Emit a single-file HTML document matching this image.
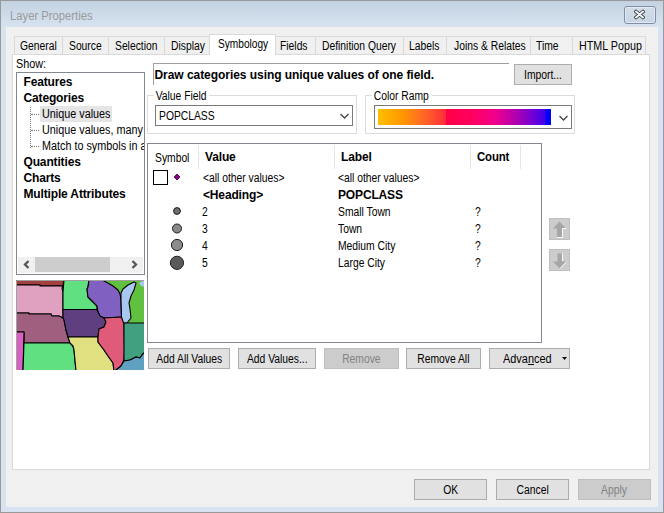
<!DOCTYPE html>
<html><head><meta charset="utf-8">
<style>
*{margin:0;padding:0;box-sizing:border-box}
html,body{width:664px;height:513px;overflow:hidden;background:#f0f0f0}
body{position:relative;font-family:"Liberation Sans",sans-serif;color:#000}
.a{position:absolute}
.t{position:absolute;margin-top:1px;font-size:12px;line-height:13px;white-space:nowrap;transform:scaleX(.86);transform-origin:0 0}
.b{position:absolute;font-size:12px;line-height:14px;font-weight:bold;letter-spacing:-0.15px;white-space:nowrap}
#frame{left:0;top:0;width:664px;height:513px;border:1px solid #999;background:#d7e3f1}
#titlegrad{left:1px;top:1px;width:662px;height:26px;background:linear-gradient(#c3d2e1,#d7e3f1)}
#inner{left:6px;top:27px;width:652px;height:480px;background:#f0f0f0}
.tab{position:absolute;top:36px;height:18px;border:1px solid #d9d9d9;border-bottom:none;background:#f0f0f0}
.tab span{position:absolute;top:3px;font-size:12px;line-height:13px;transform:scaleX(.86);transform-origin:0 0;white-space:nowrap}
.tab.sel{top:34px;height:21px;background:#fff;z-index:3}
.tab.sel span{top:3px}
#panel{left:12px;top:54px;width:638px;height:416px;background:#fff;border:1px solid #d9d9d9;z-index:2}
.btn{position:absolute;height:21px;border:1px solid #adadad;background:#e1e1e1;text-align:center;font-size:12px;line-height:19px;white-space:nowrap;color:#000}
.btn span{display:inline-block;position:relative;top:1px;transform:scaleX(.86)}
.btn.dis{border-color:#bfbfbf;background:#cccccc;color:#838383}
.grp{position:absolute;border:1px solid #dcdcdc}
.grp span{position:absolute;top:-6px;left:6px;background:#fff;padding:0 3px 0 2px;font-size:12px;line-height:13px;white-space:nowrap;transform:scaleX(.86);transform-origin:0 0}
.combo{position:absolute;border:1px solid #7a7a7a;background:#fff}
.chev{position:absolute}
</style></head><body>
<div id="frame" class="a"></div>
<div id="titlegrad" class="a"></div>
<div class="t" style="left:10px;top:9px;font-size:12.5px;color:#9a9a9a;transform:scaleX(.9)">Layer Properties</div>
<!-- close button -->
<div class="a" style="left:624px;top:6px;width:32px;height:18px;border:1px solid #7f8ea6;border-radius:3px;background:linear-gradient(#d2dde9,#c8d5e3);box-shadow:inset 0 0 0 1px #e3eaf2"></div>
<svg class="a" style="left:633px;top:9px" width="14" height="12" viewBox="0 0 14 12">
<path d="M3 2.6 L10 8.4 M10 2.6 L3 8.4" stroke="#3c4048" stroke-width="3.8" stroke-linecap="round"/>
<path d="M3 2.6 L10 8.4 M10 2.6 L3 8.4" stroke="#f6f6f6" stroke-width="2" stroke-linecap="round"/>
</svg>
<div id="inner" class="a"></div>

<!-- tabs -->
<div class="tab" style="left:14px;width:49px"><span style="left:4.5px">General</span></div>
<div class="tab" style="left:62px;width:47px"><span style="left:6.2px">Source</span></div>
<div class="tab" style="left:108px;width:57px"><span style="left:6.3px">Selection</span></div>
<div class="tab" style="left:164px;width:48px"><span style="left:6.0px">Display</span></div>
<div class="tab sel" style="left:209px;width:67px"><span style="left:7.6px;transform:scaleX(.845)">Symbology</span></div>
<div class="tab" style="left:275px;width:41px"><span style="left:4.4px">Fields</span></div>
<div class="tab" style="left:315px;width:89px"><span style="left:6.3px">Definition Query</span></div>
<div class="tab" style="left:403px;width:44px"><span style="left:5.0px">Labels</span></div>
<div class="tab" style="left:446px;width:85px"><span style="left:6.9px">Joins &amp; Relates</span></div>
<div class="tab" style="left:530px;width:43px"><span style="left:5.0px">Time</span></div>
<div class="tab" style="left:572px;width:74px"><span style="left:5.5px;transform:scaleX(.895)">HTML Popup</span></div>

<div id="panel" class="a"></div>
<div id="content" class="a" style="left:0;top:0;width:664px;height:513px;z-index:4">
<div class="t" style="left:16px;top:57px;transform:scaleX(.9)">Show:</div>

<!-- list box -->
<div class="a" style="left:16px;top:72px;width:129px;height:203px;border:1px solid #828790;background:#fff;overflow:hidden">
  <div class="b" style="left:6.5px;top:2px">Features</div>
  <div class="b" style="left:6.5px;top:18px">Categories</div>
  <div class="a" style="left:23px;top:33px;width:72px;height:16px;background:#e5e5e5"></div>
  <div class="a" style="left:13px;top:34px;width:1px;height:41px;border-left:1px dotted #7a7a7a"></div>
  <div class="a" style="left:14px;top:41px;width:8px;height:1px;border-top:1px dotted #7a7a7a"></div>
  <div class="a" style="left:14px;top:57px;width:8px;height:1px;border-top:1px dotted #7a7a7a"></div>
  <div class="a" style="left:14px;top:73px;width:8px;height:1px;border-top:1px dotted #7a7a7a"></div>
  <div class="t" style="left:25px;top:34px;transform:scaleX(.9)">Unique values</div>
  <div class="t" style="left:25px;top:50px;transform:scaleX(.9)">Unique values, many</div>
  <div class="t" style="left:25px;top:66px;transform:scaleX(.9)">Match to symbols in a</div>
  <div class="b" style="left:6.5px;top:82px">Quantities</div>
  <div class="b" style="left:6.5px;top:98px">Charts</div>
  <div class="b" style="left:6.5px;top:114px">Multiple Attributes</div>
  <!-- scrollbar -->
  <div class="a" style="left:1px;top:184px;width:125px;height:16px;background:#f0f0f0"></div>
  <div class="a" style="left:18px;top:184px;width:75px;height:15px;background:#cdcdcd"></div>
  <svg class="a" style="left:5.5px;top:187px" width="8" height="9"><path d="M5.5 1 L2 4.5 L5.5 8" fill="none" stroke="#555" stroke-width="2.3"/></svg>
  <svg class="a" style="left:113.3px;top:187px" width="8" height="9"><path d="M2.5 1 L6 4.5 L2.5 8" fill="none" stroke="#555" stroke-width="2.3"/></svg>
</div>

<!-- map -->
<svg class="a" style="left:16px;top:280px" width="128" height="90" viewBox="16 280 128 90">
<g stroke="#000" stroke-width="1.1" stroke-linejoin="round">
<rect x="16" y="280" width="129" height="91" fill="#60c040" stroke="none"/>
<polygon points="16,280 64,280 63,286 40,286 40,285 16,285" fill="#a33f3f"/>
<polygon points="16,285 40,285 40,286 63,286 62,288 63,292 63,318 59,316 52,316 51,314 29,314 29,313 16,313" fill="#e0a0c0"/>
<polygon points="64,280 89,280 88,287 87,289 88,297 92,301 97,306 97,309.5 63,309.5 63,292" fill="#60e080"/>
<polygon points="89,280 102,280 108,283 113,286 118,290 120,294 121,300 121.5,317 104,318 100,316 98,312 97,306 92,301 88,297 87,289 88,287" fill="#8060c0"/>
<polygon points="16,313 29,313 29,314 51,314 52,316 59,316 63,318 64,320 66,330 68,337 70,343 24,343 24,332 16,332" fill="#a05f7e"/>
<polygon points="63,309.5 97,309.5 98,312 100,316 104,318 106,322 104,327 99,329 98,337 68,337 66,330 64,320 63,318" fill="#603f80"/>
<polygon points="16,332 24,332 23,371 16,371" fill="#d860c0"/>
<polygon points="24,343 70,343 73,346 74,350 76,371 23,371" fill="#60e080"/>
<polygon points="68,337 98,337 98,342 104,350 108,356 113,363 114,371 76,371 74,350 73,346 70,343" fill="#e0e080"/>
<polygon points="104,318 121.5,317 124,322 124.5,352 124,360 121,366 116,370 114,371 113,363 108,356 104,350 98,342 98,337 99,329 104,327 106,322" fill="#e05a7a"/>
<polygon points="121,293 123,289 128,285 134,282 136,283 134,290 131,296 129,303 130,309 131,318 127,323 123.5,323 121.5,317 121,300" fill="#a8c8f0"/>
<polygon points="139,283 142,281 145,281 145,287 141,286" fill="#a8c8f0" stroke="none"/>
<polygon points="124,323 145,323 145,352 142,355 140,358 136,357 130,360 124,361" fill="#40a080"/>
<polygon points="124,361 130,360 136,357 140,358 142,355 145,352 145,371 114,371 116,370 121,366" fill="#60a0c0"/>
</g>
<path d="M16.5 370 L16.5 280.5 L144 280.5" fill="none" stroke="#a0a0a0"/>
</svg>

<!-- draw box -->
<div class="a" style="left:153px;top:63px;width:356px;height:22px;border-top:1px solid #a0a0a0;border-left:1px solid #a0a0a0"></div>
<div class="b" style="left:154.5px;top:68px;letter-spacing:-0.05px">Draw categories using unique values of one field.</div>
<div class="btn" style="left:514px;top:64px;width:58px"><span>Import...</span></div>

<!-- value field -->
<div class="grp" style="left:147px;top:95px;width:210px;height:39px"><span>Value Field</span></div>
<div class="combo" style="left:155px;top:105px;width:198px;height:21px"></div>
<div class="t" style="left:159.3px;top:109px">POPCLASS</div>
<svg class="a" style="left:339.5px;top:112.5px" width="9" height="6"><path d="M0.5 1 L4.5 5 L8.5 1" fill="none" stroke="#444" stroke-width="1.3"/></svg>

<!-- color ramp -->
<div class="grp" style="left:365px;top:95px;width:210px;height:39px"><span>Color Ramp</span></div>
<div class="combo" style="left:374px;top:105px;width:198px;height:24px"></div>
<div class="a" style="left:378px;top:109px;width:173px;height:16px;background:linear-gradient(to right,#ffbf00 0%,#ff9800 14%,#ff7020 24%,#ff4a30 33%,#ff2a3c 39%,#ff0048 39.6%,#ff0060 55%,#f0008c 68%,#a800b4 81%,#4000f0 96.5%,#0000ff 97.4%,#0000ff 100%)"></div>
<svg class="a" style="left:558.5px;top:114.5px" width="9" height="6"><path d="M0.5 1 L4.5 5 L8.5 1" fill="none" stroke="#444" stroke-width="1.3"/></svg>

<!-- table -->
<div class="a" style="left:147px;top:143px;width:395px;height:200px;border:1px solid #828790;background:#fff">
  <div class="a" style="left:50px;top:1px;width:1px;height:24px;background:#e5e5e5"></div>
  <div class="a" style="left:186px;top:1px;width:1px;height:24px;background:#e5e5e5"></div>
  <div class="a" style="left:322px;top:1px;width:1px;height:24px;background:#e5e5e5"></div>
  <div class="a" style="left:372px;top:1px;width:1px;height:24px;background:#e5e5e5"></div>
</div>
<div class="t" style="left:155px;top:150.5px">Symbol</div>
<div class="b" style="left:205px;top:150px">Value</div>
<div class="b" style="left:341px;top:150px">Label</div>
<div class="b" style="left:477px;top:150px;transform:scaleX(.95);transform-origin:0 0">Count</div>

<div class="a" style="left:153px;top:170px;width:15px;height:15px;border:1px solid #000;background:#fff"></div>
<svg class="a" style="left:172px;top:172px" width="10" height="10"><path d="M5 2 L8 5 L5 8 L2 5 Z" fill="#800080" stroke="#400040" stroke-width="0.8"/></svg>
<div class="t" style="left:203px;top:171px">&lt;all other values&gt;</div>
<div class="t" style="left:338px;top:171px">&lt;all other values&gt;</div>
<div class="b" style="left:203px;top:188px">&lt;Heading&gt;</div>
<div class="b" style="left:338px;top:188px">POPCLASS</div>

<svg class="a" style="left:167px;top:201px" width="20" height="70">
<circle cx="10" cy="10" r="3.4" fill="#6e6e6e" stroke="#1e1e1e"/>
<circle cx="10" cy="27.5" r="4.5" fill="#8a8a8a" stroke="#1e1e1e"/>
<circle cx="10" cy="44" r="5.6" fill="#8c8c8c" stroke="#1e1e1e"/>
<circle cx="10" cy="61.8" r="6.6" fill="#5a5a5a" stroke="#1e1e1e"/>
</svg>
<div class="t" style="left:202px;top:205px">2</div>
<div class="t" style="left:202px;top:222px">3</div>
<div class="t" style="left:202px;top:239px">4</div>
<div class="t" style="left:202px;top:256px">5</div>
<div class="t" style="left:338px;top:205px">Small Town</div>
<div class="t" style="left:338px;top:222px">Town</div>
<div class="t" style="left:338px;top:239px">Medium City</div>
<div class="t" style="left:338px;top:256px">Large City</div>
<div class="t" style="left:475px;top:205px">?</div>
<div class="t" style="left:475px;top:222px">?</div>
<div class="t" style="left:475px;top:239px">?</div>
<div class="t" style="left:475px;top:256px">?</div>

<!-- up/down -->
<div class="btn dis" style="left:549px;top:218px;width:21px;height:22px"></div>
<svg class="a" style="left:549px;top:218px" width="21" height="22">
<path d="M10.5 3.5 L17 10.5 L13 10.5 L13 19 L8 19 L8 10.5 L4 10.5 Z" fill="#a6a6a6"/>
<path d="M13.5 10.5 L13.5 19.5 L8 19.5 M13.5 10.5 L17 10.5" fill="none" stroke="#fafafa" stroke-width="1"/>
</svg>
<div class="btn dis" style="left:549px;top:249px;width:21px;height:22px"></div>
<svg class="a" style="left:549px;top:249px" width="21" height="22">
<path d="M8.5 4.5 L13 4.5 L13 12.5 L17 12.5 L10.5 19.5 L4 12.5 L8.5 12.5 Z" fill="#a6a6a6"/>
<path d="M13.5 4.5 L13.5 12 M17.2 13 L11 19.7" fill="none" stroke="#fafafa" stroke-width="1"/>
</svg>

<!-- buttons -->
<div class="btn" style="left:148px;top:348px;width:82px"><span>Add All Values</span></div>
<div class="btn" style="left:238px;top:348px;width:78px"><span>Add Values...</span></div>
<div class="btn dis" style="left:324px;top:348px;width:75px"><span>Remove</span></div>
<div class="btn" style="left:406px;top:348px;width:75px"><span>Remove All</span></div>
<div class="btn" style="left:489px;top:348px;width:81px;text-align:left;padding-left:13px"><span style="transform:scaleX(.91);transform-origin:0 0">Adva<u>n</u>ced</span></div>
<svg class="a" style="left:562px;top:357px" width="6" height="4"><path d="M0 0 L5 0 L2.5 3 Z" fill="#000"/></svg>
</div>

<!-- bottom buttons -->
<div class="btn" style="left:414px;top:479px;width:73px"><span>OK</span></div>
<div class="btn" style="left:496px;top:479px;width:73px"><span>Cancel</span></div>
<div class="btn dis" style="left:578px;top:479px;width:73px"><span>Apply</span></div>
</body></html>
